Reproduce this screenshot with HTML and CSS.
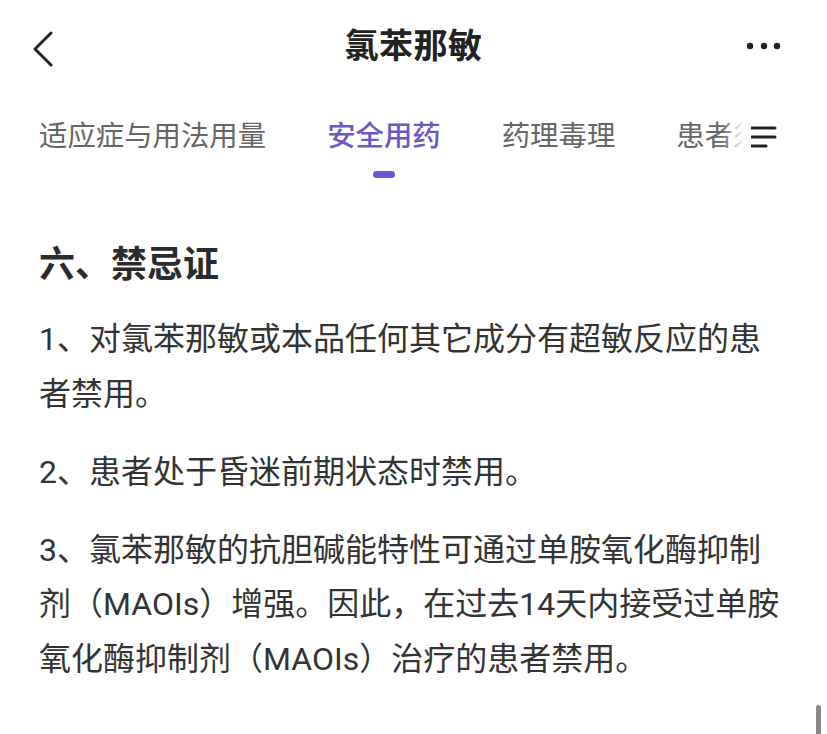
FILE: index.html
```html
<!DOCTYPE html>
<html lang="zh-CN">
<head>
<meta charset="utf-8">
<title>氯苯那敏</title>
<link rel="stylesheet" href="styles.css">
</head>
<body>
<div class="page">
  <header class="topbar">
    <div class="back">
      <svg width="30" height="40" viewBox="0 0 30 40"><path d="M22 4 L6 20 L22 36" fill="none" stroke="#222" stroke-width="3" stroke-linecap="round" stroke-linejoin="round"/></svg>
    </div>
    <h1 class="title">氯苯那敏</h1>
    <div class="more">
      <svg width="40" height="12" viewBox="0 0 40 12"><circle cx="6" cy="6" r="3.2" fill="#222"/><circle cx="20" cy="6" r="3.2" fill="#222"/><circle cx="33" cy="6" r="3.2" fill="#222"/></svg>
    </div>
  </header>
  <nav class="tabs">
    <div class="tab-track">
      <div class="tab">适应症与用法用量</div>
      <div class="tab active">安全用药<span class="indicator"></span></div>
      <div class="tab">药理毒理</div>
      <div class="tab">患者须知</div>
    </div>
    <div class="tab-fade"></div>
    <div class="tab-menu">
      <svg width="26" height="24" viewBox="0 0 26 24"><path d="M1 3 H24 M1 12 H24 M1 21 H15" stroke="#222" stroke-width="3" stroke-linecap="round"/></svg>
    </div>
  </nav>
  <main class="content">
    <h2 class="heading">六、禁忌证</h2>
    <p class="para">1、对氯苯那敏或本品任何其它成分有超敏反应的患者禁用。</p>
    <p class="para">2、患者处于昏迷前期状态时禁用。</p>
    <p class="para">3、氯苯那敏的抗胆碱能特性可通过单胺氧化酶抑制剂（MAOIs）增强。因此，在过去14天内接受过单胺氧化酶抑制剂（MAOIs）治疗的患者禁用。</p>
  </main>
  <div class="scrollbar"></div>
</div>
</body>
</html>
```
FILE: styles.css
```css
* { box-sizing: border-box; }
html, body { margin: 0; padding: 0; background: #fff; }
body {
  font-family: Roboto, "Noto Sans CJK SC", "Noto Sans", sans-serif;
  color: #333;
}
.page {
  position: relative;
  width: 827px;
  height: 734px;
  overflow: hidden;
}
.topbar {
  height: 92px;
  display: grid;
  grid-template-columns: 120px 1fr 120px;
  align-items: center;
}
.back {
  padding-left: 29px;
  padding-top: 6px;
  display: flex;
}
.title {
  margin: 0;
  text-align: center;
  font-size: 34px;
  font-weight: 700;
  color: #222;
  line-height: 44px;
  letter-spacing: 0.5px;
}
.more {
  display: flex;
  justify-content: flex-end;
  padding-right: 43px;
}
.tabs {
  position: relative;
  height: 90px;
  overflow: hidden;
}
.tab-track {
  display: flex;
  padding-left: 39px;
  padding-top: 25px;
  gap: 61px;
  white-space: nowrap;
}
.tab {
  position: relative;
  font-size: 28.4px;
  line-height: 40px;
  color: #666;
  flex: none;
}
.tab.active { color: #6a58c6; font-weight: 500; }
.indicator {
  position: absolute;
  left: 50%;
  top: 54px;
  width: 22px;
  height: 7px;
  margin-left: -11px;
  border-radius: 4px;
  background: #6b57d8;
}
.tab-fade {
  position: absolute;
  top: 0;
  left: 722px;
  width: 105px;
  height: 80px;
  background: linear-gradient(to right, rgba(255,255,255,0) 0, #fff 22px, #fff 100%);
}
.tab-menu {
  position: absolute;
  top: 33px;
  left: 751px;
  display: flex;
}
.content {
  padding: 58px 44px 0 39px;
}
.heading {
  margin: 0 0 22px 0;
  font-size: 36px;
  line-height: 50px;
  font-weight: 700;
  color: #2b2b2b;
}
.para {
  margin: 0 0 23.5px 0;
  font-size: 32px;
  line-height: 54.5px;
  color: #333;
}
.scrollbar {
  position: absolute;
  left: 816px;
  top: 705px;
  width: 5px;
  height: 40px;
  border-radius: 3px;
  background: #888;
}
```
